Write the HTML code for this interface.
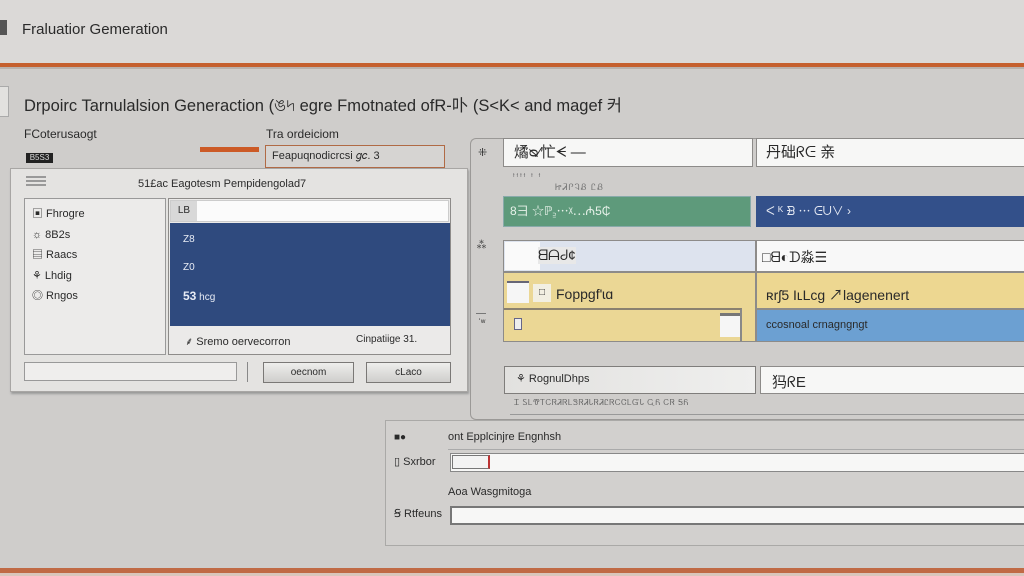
<!DOCTYPE html>
<html><head><meta charset="utf-8"><style>
*{margin:0;padding:0;box-sizing:border-box}
body{width:1024px;height:576px;overflow:hidden;background:#cfcdcb;font-family:"Liberation Sans","Noto Sans CJK SC",sans-serif;color:#2a2a2a;position:relative}
div{position:absolute}
.t{white-space:nowrap}
.w{background:#f7f7f6;border:1px solid #8d8b89}
.btn{background:linear-gradient(#eeeeec,#cfcecc);border:1px solid #7a7876;font-size:10px;text-align:center;line-height:19px}
</style></head><body>
<div style="left:0;top:0;width:1024px;height:63px;background:#dbd9d7"></div>
<div style="left:0;top:20px;width:7px;height:15px;background:#555"></div>
<div class="t" style="left:22px;top:21px;font-size:15px">Fraluatior Gemeration</div>
<div style="left:0;top:63px;width:1024px;height:4px;background:#c5602e"></div>
<div style="left:0;top:67px;width:1024px;height:2px;background:#b9b2ad"></div>

<div style="left:0;top:86px;width:9px;height:31px;background:#e2e1df;border:1px solid #aaa;border-left:none"></div>
<div class="t" style="left:24px;top:92px;font-size:16.5px">Drpoirc Tarnulalsion Generaction (ঙ৸ egre Fmotnated ofR-卟 (S&lt;K&lt; and magef 커</div>

<div class="t" style="left:24px;top:127px;font-size:12px">FCoterusaogt</div>
<div style="left:26px;top:153px;width:27px;height:10px;background:#222;color:#ddd;font-size:8px;line-height:10px;text-align:center">B5S3</div>
<div style="left:200px;top:147px;width:59px;height:5px;background:#cc5a26"></div>
<div class="t" style="left:266px;top:127px;font-size:12px">Tra ordeiciom</div>
<div style="left:265px;top:145px;width:180px;height:23px;border:1px solid #b06a45;background:#d6d4d2;font-size:11px;line-height:20px;padding-left:6px" class="t">Feapuqnodicrcsi 𝑔𝑐. 3</div>

<!-- dialog -->
<div style="left:10px;top:168px;width:458px;height:224px;background:#e4e3e1;border:1px solid #a8a6a4;box-shadow:1px 2px 2px #999"></div>
<div style="left:26px;top:176px;width:20px;height:2px;background:#999;box-shadow:0 4px 0 #999,0 8px 0 #999"></div>
<div class="t" style="left:138px;top:178px;font-size:11px">51£ac Eagotesm Pempidengolad7</div>
<div style="left:24px;top:198px;width:142px;height:157px;background:#ecebea;border:1px solid #999"></div>
<div class="t" style="left:32px;top:204px;font-size:11px;line-height:20.5px">▣ Fhrogre<br>☼ 8B2s<br>▤ Raacs<br>⚘ Lhdig<br>◎ Rngos</div>
<div style="left:168px;top:198px;width:283px;height:157px;background:#ebeae9;border:1px solid #8d8b89"></div>
<div style="left:170px;top:200px;width:279px;height:22px;background:#fbfbfb;border:1px solid #ccc"></div>
<div style="left:171px;top:201px;width:26px;height:20px;background:#d8d8d8;font-size:10px;line-height:20px;text-align:center">LB</div>
<div style="left:170px;top:223px;width:280px;height:103px;background:#2f4a7e"></div>
<div class="t" style="left:183px;top:226px;color:#e8ecf5;font-size:10px;line-height:28px">Z8<br>Z0<br><b style="font-size:12px">53</b> hcg</div>
<div class="t" style="left:185px;top:334px;font-size:11px">⸙ Sremo oervecorron</div>
<div class="t" style="left:356px;top:334px;font-size:10px">Cinpatiige 31.</div>
<div style="left:24px;top:362px;width:213px;height:19px;background:#efeeed;border:1px solid #999"></div>
<div style="left:247px;top:362px;width:1px;height:20px;background:#888"></div>
<div class="btn" style="left:263px;top:362px;width:91px;height:21px">oecnom</div>
<div class="btn" style="left:366px;top:362px;width:85px;height:21px">cLaco</div>

<!-- right panel -->
<div style="left:470px;top:138px;width:560px;height:282px;border:1px solid #9b9997;border-radius:6px 0 0 6px;border-right:none"></div>
<div class="t" style="left:478px;top:146px;font-size:11px">⁜</div>
<div class="t" style="left:476px;top:236px;font-size:11px">⁂</div>
<div style="left:476px;top:313px;width:10px;height:1px;background:#777"></div>
<div class="t" style="left:478px;top:317px;font-size:9px">ʾʷ</div>
<div class="w t" style="left:503px;top:138px;width:250px;height:29px;font-size:15px;line-height:28px;padding-left:10px">燏ᴓ⁄忙ᗕ —</div>
<div class="w t" style="left:756px;top:138px;width:270px;height:29px;font-size:15px;line-height:28px;padding-left:9px">丹础ᖇᕮ 亲</div>
<div class="t" style="left:513px;top:172px;font-size:7px;color:#777;letter-spacing:2px">ᵻᵻᵻᵻ ᵻ ᵻ</div>
<div class="t" style="left:555px;top:182px;font-size:9px;color:#777;letter-spacing:1px">ᏥᏘᎵᎸᏰ ᏝᏰ</div>
<div style="left:503px;top:196px;width:248px;height:31px;background:#5e9a7b;border:1px solid #8aa;color:#e8f2ea;font-size:12px;line-height:29px;padding-left:6px" class="t">8彐 ☆ℙ꜇⋯ᵡ⋯₼5₵</div>
<div style="left:756px;top:196px;width:270px;height:31px;background:#33508a;color:#e4e8f2;font-size:12px;line-height:31px;padding-left:10px" class="t">ᐸ ᴷ ᗿ ⋯ ᕮᑌ∨ ›</div>
<div style="left:503px;top:240px;width:253px;height:32px;background:#dde3ee;border:1px solid #8d8b89"></div>
<div style="left:505px;top:242px;width:35px;height:28px;background:#fafafa"></div>
<div class="t" style="left:538px;top:247px;font-size:14px;background:#e8e8e8">ᗺᗩᑯ¢</div>
<div style="left:756px;top:240px;width:270px;height:32px;background:#f8f8f8;border:1px solid #8d8b89"></div>
<div class="t" style="left:762px;top:247px;font-size:14px">□ᗺ◐ᗪ淼☰</div>
<div style="left:503px;top:272px;width:253px;height:70px;background:#ebd795;border:1px solid #8d8b89"></div>
<div style="left:507px;top:281px;width:22px;height:22px;background:#f6f6f6;border-top:2px solid #667"></div>
<div style="left:533px;top:284px;width:18px;height:18px;background:#f2efe2;font-size:10px;line-height:18px;text-align:center">□</div>
<div class="t" style="left:556px;top:286px;font-size:14px">Foppgf'ɩɑ</div>
<div style="left:504px;top:308px;width:238px;height:33px;border-top:2px solid #8a8170;border-right:2px solid #888"></div>
<div style="left:514px;top:318px;width:8px;height:12px;border:1px solid #668;background:#eee"></div>
<div style="left:720px;top:313px;width:20px;height:24px;background:#f6f6f6;border-top:3px solid #777"></div>
<div style="left:756px;top:272px;width:270px;height:37px;background:#edd791;border:1px solid #8d8b89"></div>
<div class="t" style="left:766px;top:285px;font-size:14px">ʀrʃ5 IʟLcg ↗lagenenert</div>
<div style="left:756px;top:309px;width:270px;height:33px;background:#6ca0d2;border:1px solid #8d8b89"></div>
<div class="t" style="left:766px;top:319px;font-size:11px">ccosnoal crnagngngt</div>
<div style="left:504px;top:366px;width:252px;height:28px;background:linear-gradient(90deg,#e2e1df,#efefee);border:1px solid #7f7d7b"></div>
<div class="t" style="left:516px;top:372px;font-size:11px">⚘ RognulDhps</div>
<div class="w" style="left:760px;top:366px;width:266px;height:28px"></div>
<div class="t" style="left:772px;top:371px;font-size:15px">犸ᖇE</div>
<div class="t" style="left:514px;top:398px;font-size:8px;color:#666;letter-spacing:0.5px">Ꮖ ᏚᏞᏡᎢᏟᏒᏘᏒᏞᏕᏒᏘᏓᏒᏘᏝᏒᏟᏣᏞᏳᏓ ᏩᏲ ᏟᏒ ᎦᏲ</div>
<div style="left:510px;top:414px;width:520px;height:1px;background:#999"></div>

<!-- bottom panel -->
<div style="left:385px;top:420px;width:645px;height:126px;border:1px solid #aaa9a7;border-right:none;background:#d2d0ce"></div>
<div class="t" style="left:394px;top:432px;font-size:10px;font-weight:bold">■●</div>
<div class="t" style="left:448px;top:431px;font-size:11px">ont Epplcinjre Engnhsh</div>
<div style="left:448px;top:449px;width:580px;height:1px;background:#aaa"></div>
<div class="t" style="left:394px;top:455px;font-size:11px">▯ Sxrbor</div>
<div class="w" style="left:450px;top:453px;width:576px;height:19px;border-color:#888"></div>
<div style="left:452px;top:455px;width:38px;height:14px;border:1px solid #777;border-right:2px solid #b33;background:#f3f3f3"></div>
<div class="t" style="left:448px;top:486px;font-size:11px">Aoa Wasgmitoga</div>
<div class="t" style="left:394px;top:507px;font-size:11px">Ꞩ Rtfeuns</div>
<div class="w" style="left:450px;top:506px;width:576px;height:19px;border:2px solid #777"></div>

<div style="left:0;top:568px;width:1024px;height:5px;background:#c06a45"></div>
<div style="left:0;top:573px;width:1024px;height:3px;background:#d9c6bc"></div>
</body></html>
